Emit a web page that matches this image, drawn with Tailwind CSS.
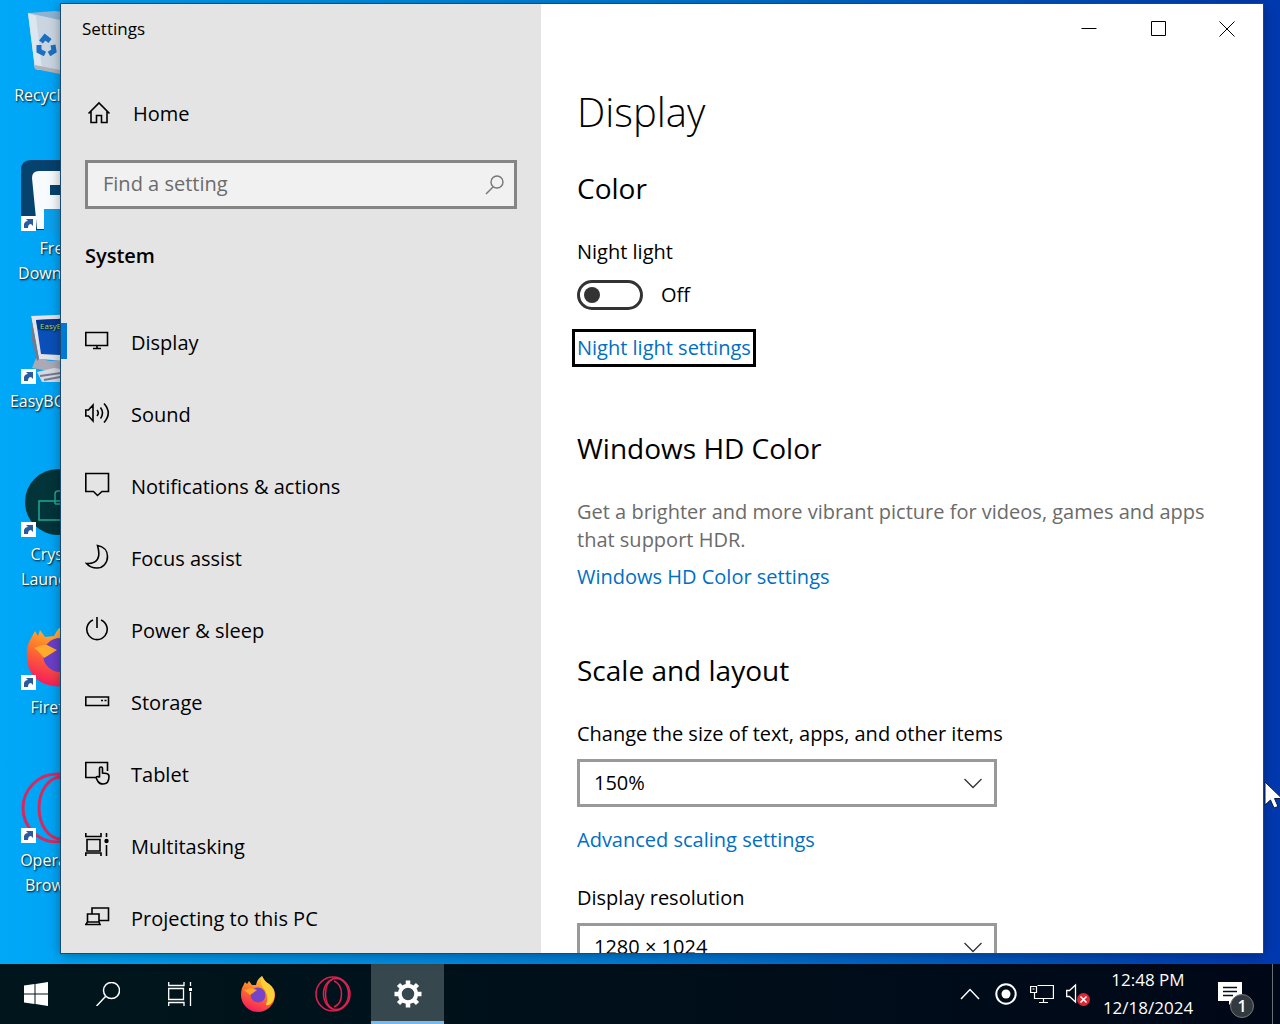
<!DOCTYPE html>
<html lang="en">
<head>
  <meta charset="UTF-8">
  <meta name="viewport" content="width=device-width, initial-scale=1.0">
  <title>Settings</title>
  <script src="https://cdn.jsdelivr.net/npm/@tailwindcss/browser@4"></script>
</head>
<body class="h-screen flex flex-col overflow-hidden font-['Open_Sans','Noto_Sans',sans-serif] text-black">

  <!-- Desktop -->
  <main class="relative flex-1 min-h-0 bg-linear-to-r from-[#00a8f8] via-[#007cd8] to-[#0038b0]">

    <!-- Desktop icons -->
    <ul class="w-28 text-base leading-[25px] text-white text-center text-shadow-[1px_1px_2px_#000]">
      <li class="h-[153px] pt-1.5 flex flex-col items-center">
        <svg class="size-[72px] shrink-0" viewBox="0 0 72 72">
          <path d="M8 7 L62 8 L55 66 L40 66 L15 63 Z" fill="#c9d6e2"/>
          <path d="M8 7 L35 5 L64 9 L40 14 Z" fill="#8fb3d0"/>
          <path d="M8 7 L15 63 L22 64 L16 10 Z" fill="#dbe6ee"/>
          <path d="M15 63 L40 68 L40 64 L15 59 Z" fill="#b3b0b8"/>
          <g fill="none" stroke="#1c6fc0" stroke-width="5">
            <path d="M21 36 L25 31 L30 35"/><path d="M33 39 L34 45 L29 48"/><path d="M25 48 L19 45 L19 39"/>
          </g>
        </svg>
        <span class="mt-[5px]">Recycle Bin</span>
      </li>
      <li class="h-[153px] pt-1.5 flex flex-col items-center">
        <svg class="size-[72px] shrink-0" viewBox="0 0 72 72">
          <path d="M1 71 V11 Q1 1 11 1 H62 Q71 1 71 11 V71 Z" fill="#06426e"/>
          <path d="M17 70 L12 19 Q12 12 19 12 H60 V26 H30 V36 H60 V50 H24 V70 Z" fill="#f8fbfd"/>
          <path d="M24 70 V50 H60 V72 H24 Z" fill="#0aa0ec"/>
          <path d="M1 57 h15 v15 h-15z" fill="#fff"/><path d="M4 69 L4 65 Q5 62 8 62 L6 60 H13 V67 L11 65 Q8 65 8 69 Z" fill="#2a5ba0"/>
        </svg>
        <span class="mt-[5px]">Free<br>Download</span>
      </li>
      <li class="h-[153px] pt-1.5 flex flex-col items-center">
        <svg class="size-[72px] shrink-0" viewBox="0 0 72 72">
          <path d="M16 46 L30 49 L60 46 L56 62 L34 60 L12 56 Z" fill="#a9aab6"/>
          <path d="M11 4 L60 2 L62 50 L19 47 Z" fill="#e4e3ea"/>
          <path d="M11 4 L19 47 L17 49 L12 28 Z" fill="#77788a"/>
          <path d="M16 8 L58 6 L58 44 L21 42 Z" fill="#0a50b8"/>
          <path d="M16 8 L58 6 L58 15 L18 18 Z" fill="#06398e"/>
          <path d="M17 60 L34 56 L60 60 L60 70 L22 70 Z" fill="#d8d8e2"/>
          <path d="M20 64 L48 60 M24 68 L56 62" stroke="#777b90" stroke-width="2"/>
          <text x="20" y="17" font-size="8" fill="#9ee070">EasyBCD</text>
          <path d="M1 57 h15 v15 h-15z" fill="#fff"/><path d="M4 69 L4 65 Q5 62 8 62 L6 60 H13 V67 L11 65 Q8 65 8 69 Z" fill="#2a5ba0"/>
        </svg>
        <span class="mt-[5px]">EasyBCD 2.4</span>
      </li>
      <li class="h-[153px] pt-1.5 flex flex-col items-center">
        <svg class="size-[72px] shrink-0" viewBox="0 0 72 72">
          <circle cx="38" cy="37" r="33" fill="#02343a"/>
          <path d="M19 36 H60 V55 H19 Z M35 39 V29 Q35 26 38 26 H50 M35 39 H50" fill="none" stroke="#1fa896" stroke-width="1.5"/>
          <path d="M1 57 h15 v15 h-15z" fill="#fff"/><path d="M4 69 L4 65 Q5 62 8 62 L6 60 H13 V67 L11 65 Q8 65 8 69 Z" fill="#2a5ba0"/>
        </svg>
        <span class="mt-[5px]">Crystal<br>Launcher</span>
      </li>
      <li class="h-[153px] pt-1.5 flex flex-col items-center">
        <svg class="size-[72px] shrink-0" viewBox="0 0 72 72">
          <defs>
            <linearGradient id="fox" x1="0.7" y1="0" x2="0.3" y2="1"><stop offset="0" stop-color="#ffd43a"/><stop offset=".45" stop-color="#ff7a2a"/><stop offset="1" stop-color="#f5175f"/></linearGradient>
          </defs>
          <path d="M9 24 L15 13 L18 18 L20 12 L25 19 L34 18 Q38 10 41 9 L47 16 Q68 23 68 41 A30 27 0 0 1 7 41 Q6 31 9 24 Z" fill="url(#fox)"/>
          <circle cx="40" cy="37" r="17" fill="#6a3fc8"/>
          <path d="M14 30 L22 27 L27 27 L37 32 L29 37 L24 40 L18 33 Z" fill="#ffab2c"/>
          <path d="M1 57 h15 v15 h-15z" fill="#fff"/><path d="M4 69 L4 65 Q5 62 8 62 L6 60 H13 V67 L11 65 Q8 65 8 69 Z" fill="#2a5ba0"/>
        </svg>
        <span class="mt-[5px]">Firefox</span>
      </li>
      <li class="h-[153px] pt-1.5 flex flex-col items-center">
        <svg class="size-[72px] shrink-0" viewBox="0 0 72 72">
          <g fill="none" stroke="#d8295e" stroke-width="3"><circle cx="37" cy="37" r="34"/><ellipse cx="41" cy="37" rx="22" ry="31"/></g>
          <path d="M1 57 h15 v15 h-15z" fill="#fff"/><path d="M4 69 L4 65 Q5 62 8 62 L6 60 H13 V67 L11 65 Q8 65 8 69 Z" fill="#2a5ba0"/>
        </svg>
        <span class="mt-[5px]">Opera GX<br>Browser</span>
      </li>
    </ul>

    <!-- Settings window -->
    <div class="absolute left-[61px] right-[17px] top-1 bottom-[11px] flex bg-white outline outline-[#1b4a70] shadow-[0_2px_12px_rgba(0,0,0,0.4)]">

      <!-- Sidebar -->
      <aside class="w-[480px] shrink-0 overflow-hidden bg-[#e4e4e4]">
        <div class="h-[50px] pl-[21px] flex items-center text-[17px]">Settings</div>

        <a href="#" class="mt-6 pl-6 h-[72px] flex items-center gap-[20px] text-[20px]">
          <svg class="size-7 -mt-1 shrink-0" viewBox="0 0 28 28" fill="none" stroke="#000" stroke-width="1.6"><path d="M3.500 15.500 L14 5 L24.500 15.500 M6 13.500 V24.500 H11.500 V17.500 H16.500 V24.500 H22 V13.500"/></svg>
          Home
        </a>

        <form class="relative mt-[10px] mx-6" role="search">
          <input id="find" type="text" aria-label="Find a setting" placeholder="Find a setting" class="block w-full h-[49px] px-[15px] pb-[3px] border-3 border-[#858585] bg-[#f1f1f1] text-[20px] placeholder:text-[#6b6b6b] rounded-none outline-none">
          <svg class="absolute right-2.5 top-3 size-6" viewBox="0 0 24 24" fill="none" stroke="#767676" stroke-width="1.400"><circle cx="14" cy="10" r="6"/><path d="M10 15 L3 22"/></svg>
        </form>

        <h2 class="mt-7 ml-6 text-[20px] leading-[38px] font-semibold">System</h2>

        <nav class="mt-8 text-[20px]">
          <a href="#" class="relative h-[72px] pl-6 flex items-center gap-[18px]">
            <span class="absolute left-0 top-4 w-1.5 h-9 bg-[#0078d7]"></span>
            <svg class="size-7 -mt-1 shrink-0" viewBox="0 0 28 28" fill="none" stroke="#000" stroke-width="1.6"><path d="M0.800 5.500 H22.500 V18.500 H0.800 Z M12 18.500 V21.500 M8 21.500 H16"/></svg>
            Display
          </a>
          <a href="#" class="h-[72px] pl-6 flex items-center gap-[18px]">
            <svg class="size-7 -mt-1 shrink-0" viewBox="0 0 28 28" fill="none" stroke="#000" stroke-width="1.6"><path d="M0.800 11 H3.500 L8 6 V22 L3.500 17 H0.800 Z M12 11 Q14.500 14 12 17 M15.500 8.500 Q19.500 14 15.500 19.500 M19 4.500 Q27.500 14 19 23.500"/></svg>
            Sound
          </a>
          <a href="#" class="h-[72px] pl-6 flex items-center gap-[18px]">
            <svg class="size-7 -mt-1 shrink-0" viewBox="0 0 28 28" fill="none" stroke="#000" stroke-width="1.6"><path d="M0.800 2.500 H23.500 V20.500 H17 L12.500 24.500 L8.500 20.500 H0.800 Z"/></svg>
            Notifications &amp; actions
          </a>
          <a href="#" class="h-[72px] pl-6 flex items-center gap-[18px]">
            <svg class="size-7 -mt-1 shrink-0" viewBox="0 0 28 28" fill="none" stroke="#000" stroke-width="1.6"><path d="M12.500 2.500 C19 3.500 22.500 8 22.500 13.500 C22.500 20 18 25 12 25 C7.500 25 4 23.500 1.500 20.500 C7.500 21 12.500 18.500 13.500 13.500 C14.500 9.500 13.500 6 12.500 2.500 Z"/></svg>
            Focus assist
          </a>
          <a href="#" class="h-[72px] pl-6 flex items-center gap-[18px]">
            <svg class="size-7 -mt-1 shrink-0" viewBox="0 0 28 28" fill="none" stroke="#000" stroke-width="1.6"><path d="M12 2 V13 M8 5 A10.200 10.200 0 1 0 16 5"/></svg>
            Power &amp; sleep
          </a>
          <a href="#" class="h-[72px] pl-6 flex items-center gap-[18px]">
            <svg class="size-7 -mt-1 shrink-0" viewBox="0 0 28 28" fill="none" stroke="#000" stroke-width="1.6"><path d="M0.800 10 H23.500 V18.500 H0.800 Z M16 13.500 H18 M19.500 13.500 H21.500"/></svg>
            Storage
          </a>
          <a href="#" class="h-[72px] pl-6 flex items-center gap-[18px]">
            <svg class="size-7 -mt-1 shrink-0" viewBox="0 0 28 28" fill="none" stroke="#000" stroke-width="1.6"><path d="M10.500 18.500 H0.800 V3.500 H22.500 V12 M14.500 18.500 V9.500 Q14.500 8 16 8 Q17.500 8 17.500 9.500 V14 L21.500 14.500 Q24 15 24 17.500 Q24 25 18 25 Q14.500 25 13 22.500 L11 18.500 Q12.500 16.500 14.500 18.500"/></svg>
            Tablet
          </a>
          <a href="#" class="h-[72px] pl-6 flex items-center gap-[18px]">
            <svg class="size-7 -mt-1 shrink-0" viewBox="0 0 28 28" fill="none" stroke="#000" stroke-width="1.6"><path d="M0.800 2 V5.500 H16 V2 M2 8.500 H15 V20 H2 Z M0.800 25 V22 H16 V25 M21.500 2 V6 M21.500 14 V25"/><circle cx="21.500" cy="10" r="2.200" fill="#000" stroke="none"/></svg>
            Multitasking
          </a>
          <a href="#" class="h-[72px] pl-6 flex items-center gap-[18px]">
            <svg class="size-7 -mt-1 shrink-0" viewBox="0 0 28 28" fill="none" stroke="#000" stroke-width="1.6"><path d="M7 10.500 V5 H23.500 V17.500 H14 M2.500 11 H14 V19 H2.500 Z M2.500 19 L0.800 21.500 H15 L14 19"/></svg>
            Projecting to this PC
          </a>
        </nav>
      </aside>

      <!-- Page -->
      <section class="flex-1 min-w-0 overflow-hidden text-[20px] leading-7">
        <div class="h-[50px] pr-0.5 flex justify-end">
          <button aria-label="Minimize" class="w-[69px] flex items-center justify-center"><svg class="size-4" viewBox="0 0 16 16" stroke="#000"><path d="M0.500 7.500 H15.500"/></svg></button>
          <button aria-label="Maximize" class="w-[69px] flex items-center justify-center"><svg class="size-4" viewBox="0 0 16 16" fill="none" stroke="#000"><path d="M1.500 0.500 H15.500 V14.500 H1.500 Z"/></svg></button>
          <button aria-label="Close" class="w-[69px] flex items-center justify-center"><svg class="size-4" viewBox="0 0 16 16" stroke="#000"><path d="M0.500 0.500 L15.500 15.500 M15.500 0.500 L0.500 15.500"/></svg></button>
        </div>

        <div class="px-9 pt-[30px] flex flex-col items-start">
          <h1 class="text-[40px] leading-14 font-light">Display</h1>

          <h2 class="mt-7 text-[28px] leading-10">Color</h2>
          <label for="night" class="mt-[30px]">Night light</label>
          <div class="mt-3.5 flex items-center gap-[18px]">
            <input id="night" type="checkbox" role="switch" class="appearance-none w-[66px] h-[30px] pl-1 flex items-center rounded-full border-3 border-[#333] before:size-4 before:rounded-full before:bg-[#333]">
            <span>Off</span>
          </div>
          <a href="#" class="mt-6 text-[#006fc4] outline-3 outline-offset-2 outline-black">Night light settings</a>

          <h2 class="mt-[66px] text-[28px] leading-10">Windows HD Color</h2>
          <p class="mt-[30px] text-[#6b6b6b]">Get a brighter and more vibrant picture for videos, games and apps that support HDR.</p>
          <a href="#" class="mt-[9px] text-[#006fc4]">Windows HD Color settings</a>

          <h2 class="mt-[59px] text-[28px] leading-10">Scale and layout</h2>
          <label for="scale" class="mt-[30px]">Change the size of text, apps, and other items</label>
          <div class="relative mt-[11px] w-[420px] max-w-full">
            <select id="scale" class="appearance-none block w-full h-12 px-3.5 border-3 border-[#999] bg-white text-[20px]">
              <option>100%</option>
              <option>125%</option>
              <option selected>150%</option>
            </select>
            <svg class="absolute right-3.5 top-4 w-5 h-4 pointer-events-none" viewBox="0 0 20 16" fill="none" stroke="#333" stroke-width="1.300"><path d="M1.500 4 L10 12.500 L18.500 4"/></svg>
          </div>
          <a href="#" class="mt-[19px] text-[#006fc4]">Advanced scaling settings</a>
          <label for="resolution" class="mt-[30px]">Display resolution</label>
          <div class="relative mt-[11px] w-[420px] max-w-full">
            <select id="resolution" class="appearance-none block w-full h-12 px-3.5 border-3 border-[#999] bg-white text-[20px]">
              <option>1280 × 1024</option>
            </select>
            <svg class="absolute right-3.5 top-4 w-5 h-4 pointer-events-none" viewBox="0 0 20 16" fill="none" stroke="#333" stroke-width="1.300"><path d="M1.500 4 L10 12.500 L18.500 4"/></svg>
          </div>
        </div>
      </section>
    </div>

    <!-- Mouse pointer -->
    <svg class="absolute -right-2 top-[781px] w-6 h-8" viewBox="0 0 24 32"><path d="M1 1 V24 L6.500 19 L10 27 L14 25.500 L10.500 17.500 H18 Z" fill="#fff" stroke="#0a1a40"/></svg>
  </main>

  <!-- Taskbar -->
  <footer class="h-[60px] shrink-0 flex bg-linear-to-r from-[#00161c] to-[#000818] text-white">
    <button aria-label="Start" class="w-[72px] flex items-center justify-center">
      <svg class="size-6" viewBox="0 0 24 24" fill="#fff"><path d="M0 3.500 L10.500 2 V11.500 H0 Z M11.500 1.900 L24 0 V11.500 H11.500 Z M0 12.500 H10.500 V22 L0 20.500 Z M11.500 12.500 H24 V24 L11.500 22.100 Z"/></svg>
    </button>
    <button aria-label="Search" class="w-[72px] flex items-center justify-center">
      <svg class="size-6" viewBox="0 0 24 24" fill="none" stroke="#fff" stroke-width="1.500"><circle cx="15.500" cy="8.500" r="8"/><path d="M9.500 14.500 L0.500 24"/></svg>
    </button>
    <button aria-label="Task View" class="w-[72px] flex items-center justify-center">
      <svg class="size-6" viewBox="0 0 24 24" fill="none" stroke="#fff" stroke-width="1.300"><path d="M0.700 0 V3.500 H16 V0 M0.700 6.500 H15.500 V17.500 H0.700 Z M0.700 24 V20.500 H16 V24 M22.500 0 V4 M22.500 10 V24"/><path d="M21 6 h3 v3 h-3z" fill="#fff" stroke="none"/></svg>
    </button>
    <div class="ml-[5px] flex gap-0.5">
      <button aria-label="Firefox" class="w-[73px] flex items-center justify-center">
        <svg class="size-9" viewBox="0 0 36 36">
          <path d="M2 12 L5 6 L7 8 L9 5 L12 9 H16 Q17 3 22 0 Q24 5 29 8 Q35 12 35 19 A17 17 0 0 1 1 19 Q1 15 2 12 Z" fill="url(#fox)"/>
          <path d="M22 0 Q24 5 29 8 Q36 14 34 23 Q31 30 26 29 Q29 22 25 14 Q19 8 22 0 Z" fill="#ffcf38"/>
          <circle cx="18" cy="19" r="7.500" fill="#7544c9"/>
          <path d="M4 14 L11 12 L17 14 L13 17 L10 19 Z" fill="#ffa52a"/>
        </svg>
      </button>
      <button aria-label="Opera GX" class="w-[73px] flex items-center justify-center">
        <svg class="size-9" viewBox="0 0 36 36" fill="none" stroke="#e0214f" stroke-width="1.500"><circle cx="18" cy="18" r="17"/><ellipse cx="21" cy="18" rx="12.500" ry="15.500"/><path d="M18 3 C8 7 8 29 18 33 M19 5 C29 9 29 27 19 31"/></svg>
      </button>
      <button aria-label="Settings" class="w-[73px] flex items-center justify-center bg-[#36474e] border-b-3 border-[#76b9ed] pt-[3px]">
        <svg class="size-7" viewBox="0 0 28 28" fill="none" stroke="#fff"><circle cx="14" cy="14" r="8.200" stroke-width="4"/><path d="M14 0.500 V5 M14 23 V27.500 M0.500 14 H5 M23 14 H27.500 M4.500 4.500 L7.500 7.500 M20.500 20.500 L23.500 23.500 M23.500 4.500 L20.500 7.500 M7.500 20.500 L4.500 23.500" stroke-width="4.500"/></svg>
      </button>
    </div>

    <!-- Tray -->
    <div class="ml-auto flex items-center">
      <button aria-label="Show hidden icons" class="w-9 flex justify-center"><svg class="w-5 h-3" viewBox="0 0 20 12" fill="none" stroke="#fff" stroke-width="1.500"><path d="M1 11 L10 1.500 L19 11"/></svg></button>
      <button aria-label="Recorder" class="w-9 flex justify-center"><svg class="size-6" viewBox="0 0 24 24"><circle cx="12" cy="12" r="9.700" fill="none" stroke="#fff" stroke-width="2"/><circle cx="12" cy="12" r="4.500" fill="#fff"/></svg></button>
      <button aria-label="Network" class="w-9 flex justify-center"><svg class="size-6" viewBox="0 0 24 24" fill="none" stroke="#fff" stroke-width="1.200"><path d="M7.500 3.500 H23.400 V16.500 H4.500 V11 M13.500 16.500 V20.500 M9 20.500 H18 M0.600 4.500 H6.500 V10.500 H0.600 Z M2.500 7 H4.500"/></svg></button>
      <button aria-label="Volume muted" class="w-9 flex justify-center"><svg class="size-6 mt-0.5" viewBox="0 0 24 24" fill="none" stroke="#fff" stroke-width="1.300"><path d="M0.700 7.500 H3.500 L9.500 2 V19 L3.500 13.500 H0.700 Z"/><circle cx="17.500" cy="16.500" r="6.500" fill="#d92838" stroke="none"/><path d="M14.500 13.500 L20.500 19.500 M20.500 13.500 L14.500 19.500" stroke-width="1.600"/></svg></button>
      <div class="w-[104px] text-center text-[17px] leading-7">12:48 PM<br>12/18/2024</div>
      <button aria-label="1 new notification" class="w-[72px] flex justify-center">
        <span class="relative block w-9 h-9">
          <svg class="size-6 mt-1.5" viewBox="0 0 24 24"><path d="M0 0 H24 V19 H15 L11 23 V19 H0 Z" fill="#fff"/><path d="M5 5.500 H19 M5 9.500 H19 M5 13.500 H15" stroke="#00101a" stroke-width="1.300"/></svg>
          <span class="absolute right-0 -bottom-1.5 size-6 rounded-full border border-[#777] bg-[#333a3f] text-base leading-[22px] font-semibold">1</span>
        </span>
      </button>
      <button aria-label="Show desktop" class="w-2 self-stretch border-l border-[#6a6f78]"></button>
    </div>
  </footer>

</body>
</html>
